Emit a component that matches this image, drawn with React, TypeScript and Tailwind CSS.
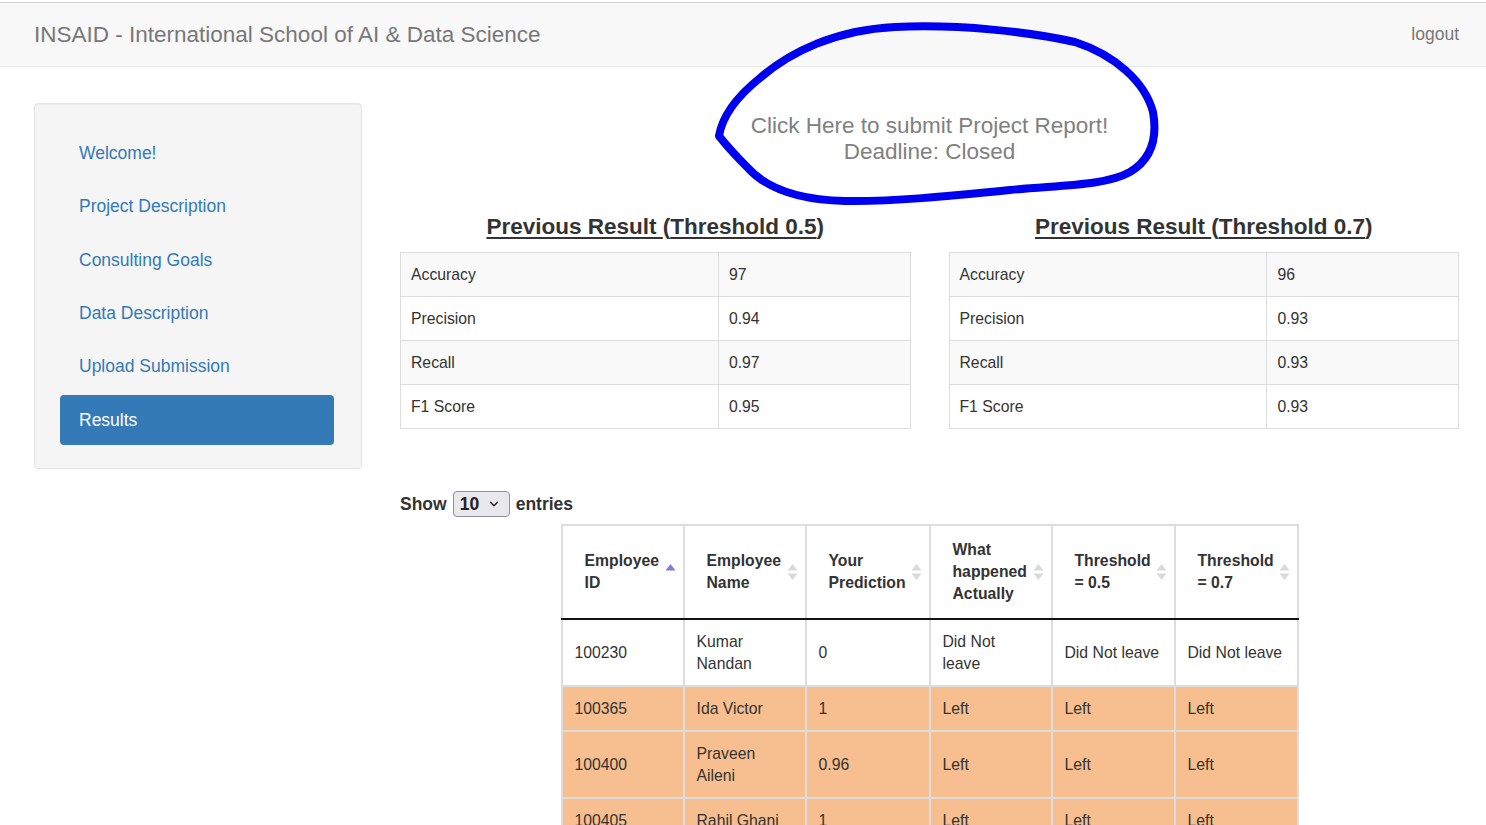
import { ChevronDown } from 'lucide-react';

const sideItems = ['Welcome!', 'Project Description', 'Consulting Goals', 'Data Description', 'Upload Submission', 'Results'];

const result05 = [
    ['Accuracy', '97'],
    ['Precision', '0.94'],
    ['Recall', '0.97'],
    ['F1 Score', '0.95'],
];

const result07 = [
    ['Accuracy', '96'],
    ['Precision', '0.93'],
    ['Recall', '0.93'],
    ['F1 Score', '0.93'],
];

const headers = [
    { label: 'Employee ID', active: true },
    { label: 'Employee Name' },
    { label: 'Your Prediction' },
    { label: 'What happened Actually' },
    { label: 'Threshold = 0.5' },
    { label: 'Threshold = 0.7' },
];

const rows = [
    { left: false, cells: ['100230', 'Kumar Nandan', '0', 'Did Not leave', 'Did Not leave', 'Did Not leave'] },
    { left: true, cells: ['100365', 'Ida Victor', '1', 'Left', 'Left', 'Left'] },
    { left: true, cells: ['100400', 'Praveen Aileni', '0.96', 'Left', 'Left', 'Left'] },
    { left: true, cells: ['100405', 'Rahil Ghani', '1', 'Left', 'Left', 'Left'] },
];

const colWidths = ['w-[122px]', 'w-[122px]', 'w-[124px]', 'w-[122px]', 'w-[123px]', 'w-[123px]'];

function SortIcon({ active }: { active?: boolean }) {
    return (
        <svg width="11" height="20" viewBox="0 0 11 20" className="absolute right-[7px] top-1/2 -translate-y-1/2">
            <path d="M5.5 2 L10.5 8.5 H0.5 Z" fill={active ? '#7d7ddc' : '#d9d9d9'} />
            {!active && <path d="M5.5 18 L10.5 11.5 H0.5 Z" fill="#d9d9d9" />}
        </svg>
    );
}

function MetricTable({ title, data }: { title: string; data: string[][] }) {
    return (
        <div>
            <h3 className="text-center text-[22.5px] font-bold leading-[26px] text-[#333] mb-[12px]">
                <span className="underline underline-offset-[3px]">Previous Result </span>(
                <span className="underline underline-offset-[3px]">{title}</span>)
            </h3>
            <table className="w-full border-collapse text-[15.75px] text-[#333]">
                <tbody>
                    {data.map(([k, v], i) => (
                        <tr key={k} className={i % 2 === 0 ? 'bg-[#f9f9f9]' : 'bg-white'}>
                            <td className="w-[62.4%] border border-[#ddd] pl-[10px] py-[10px] leading-[23px]">{k}</td>
                            <td className="border border-[#ddd] pl-[10px] py-[10px] leading-[23px]">{v}</td>
                        </tr>
                    ))}
                </tbody>
            </table>
        </div>
    );
}

export default function App() {
    return (
        <div className="relative min-h-[825px] bg-white font-['Liberation_Sans',Arial,sans-serif] overflow-hidden">
            <nav className="mt-[2px] h-[65px] border-t border-b border-t-[#d2d2d2] border-b-[#e7e7e7] bg-[#f8f8f8] flex items-center justify-between pl-[34px] pr-[27px]">
                <span className="text-[22.5px] text-[#777]">INSAID - International School of AI &amp; Data Science</span>
                <a href="#" className="text-[17.5px] text-[#777]">logout</a>
            </nav>

            <div className="flex gap-[38px] pl-[34px] pr-[27px]">
                <aside className="mt-[36px] w-[328px] self-start rounded-[4px] border border-[#e3e3e3] bg-[#f5f5f5] shadow-[inset_0_1px_1px_rgba(0,0,0,0.05)] pt-[24px] pb-[23px] pl-[25px] pr-[27px]">
                    <ul className="flex flex-col gap-[3.4px]">
                        {sideItems.map(item => (
                            <li key={item}>
                                <a
                                    href="#"
                                    className={`flex h-[50px] items-center rounded-[4px] pl-[19px] text-[17.5px] ${item === 'Results' ? 'bg-[#337ab7] text-white' : 'text-[#337ab7]'}`}
                                >
                                    {item}
                                </a>
                            </li>
                        ))}
                    </ul>
                </aside>

                <main className="flex-1 pt-[46px]">
                    <div className="text-center text-[22.5px] leading-[26px] text-[#808080]">
                        <p>Click Here to submit Project Report!</p>
                        <p>Deadline: Closed</p>
                    </div>

                    <div className="mt-[49px] grid grid-cols-2 gap-[38px]">
                        <MetricTable title="Threshold 0.5" data={result05} />
                        <MetricTable title="Threshold 0.7" data={result07} />
                    </div>

                    <div className="mt-[62px] flex items-center gap-[6px] text-[17.5px] font-bold text-[#333]">
                        <span>Show</span>
                        <div className="flex h-[26px] w-[57px] items-center justify-between rounded-[4px] border border-[#8f8f9d] bg-[#e9e9ed] pl-[6px] pr-[8px] text-[#222]">
                            <span>10</span>
                            <ChevronDown size={14} strokeWidth={2.5} />
                        </div>
                        <span>entries</span>
                    </div>

                    <div className="mt-[7px] flex justify-center">
                        <table className="table-fixed border-collapse border-2 border-[#ddd] text-[15.75px] text-[#333]">
                            <thead>
                                <tr className="bg-white">
                                    {headers.map((h, i) => (
                                        <th
                                            key={h.label}
                                            className={`${colWidths[i]} relative border-x-2 border-x-[#ddd] border-b-2 border-b-[#111] py-[13px] pl-[22px] pr-[20px] text-left align-middle font-bold leading-[22px]`}
                                        >
                                            {h.label}
                                            <SortIcon active={h.active} />
                                        </th>
                                    ))}
                                </tr>
                            </thead>
                            <tbody>
                                {rows.map(r => (
                                    <tr key={r.cells[0]} className={r.left ? 'bg-[#f7bf8f]' : 'bg-white'}>
                                        {r.cells.map((c, i) => (
                                            <td
                                                key={i}
                                                className={`border-x-2 border-b-2 border-[#ddd] py-[10.5px] pl-[12px] align-middle leading-[22px] ${i === 3 ? 'pr-[18px]' : 'pr-[10px]'}`}
                                            >
                                                {c}
                                            </td>
                                        ))}
                                    </tr>
                                ))}
                            </tbody>
                        </table>
                    </div>
                </main>
            </div>

            {/* hand-drawn annotation circle */}
            <svg
                className="pointer-events-none absolute left-0 top-0"
                width="1486"
                height="825"
                viewBox="0 0 1486 825"
            >
                <path
                    d="M 719 136 C 722 118, 735 98, 760 78 C 790 52, 835 30, 895 27 C 960 24, 1030 32, 1075 42 C 1115 55, 1145 82, 1153 112 C 1158 140, 1150 160, 1130 172 C 1105 186, 1060 185, 1010 190 C 950 196, 890 202, 845 201 C 800 200, 768 190, 748 168 C 735 155, 726 145, 719 136 Z"
                    fill="none"
                    stroke="#0000f0"
                    strokeWidth="8"
                    strokeLinecap="round"
                    strokeLinejoin="round"
                />
            </svg>
        </div>
    );
}
